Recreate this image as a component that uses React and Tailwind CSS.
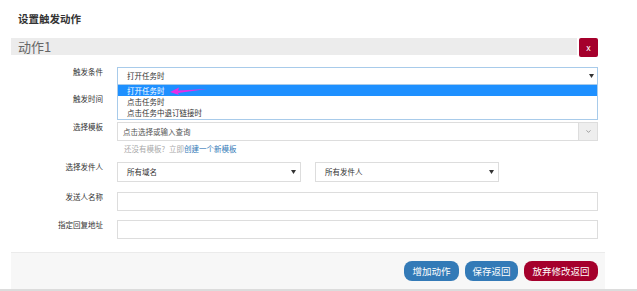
import React from 'react';
import { ChevronDown } from 'lucide-react';

const font = { fontFamily: '"Noto Sans CJK SC", "Noto Sans", sans-serif' };

const Caret = () => (
  <svg width="5" height="4" viewBox="0 0 5 4" className="shrink-0">
    <path d="M0 0 L5 0 L2.5 4 Z" fill="#333" />
  </svg>
);

const Row = ({ label, children, className = '' }) => (
  <div className={`flex items-start ${className}`}>
    <div className="w-[103px] shrink-0 text-right text-[7.5px] leading-[10px] text-[#333]">{label}</div>
    <div className="ml-[14px] flex-1">{children}</div>
  </div>
);

const App = () => {
  const options = ['打开任务时', '点击任务时', '点击任务中退订链接时'];

  return (
    <div className="w-[637px] h-[291px] bg-white relative overflow-hidden" style={font}>
      {/* Title */}
      <div className="pl-[18px] pt-[13px] text-[10.5px] leading-[12px] font-bold text-[#333]">设置触发动作</div>

      {/* Action header */}
      <div className="mt-[13px] ml-[11px] mr-[39px] flex items-start">
        <div className="flex-1 h-[17px] bg-[#ececec] pl-[7px] text-[13px] leading-[17px] text-[#666]">动作1</div>
        <button className="ml-[2px] w-[19px] h-[19px] bg-[#a5002c] rounded-[2px] text-white text-[9px] leading-[18px] text-center">x</button>
      </div>

      <div className="mr-[39px]">
        {/* 触发条件 */}
        <Row label="触发条件" className="mt-[10px]">
          <div className="relative">
            <div className="h-[18px] border border-[#a8cbea] bg-white flex items-center pl-[9px] pr-[3px] text-[7.5px] text-[#333]">
              <span className="flex-1">打开任务时</span>
              <Caret />
            </div>
            <div className="absolute left-0 right-0 top-[18px] z-10 bg-white border border-[#a8cbea] border-t-0 pb-[1px]">
              {options.map((o, i) => (
                <div
                  key={o}
                  className={`h-[11px] pl-[9px] text-[7.5px] leading-[11px] ${i === 0 ? 'bg-[#1e90ff] text-white' : 'text-[#333]'}`}
                >
                  {o}
                </div>
              ))}
              <svg className="absolute left-[52px] top-[2px]" width="38" height="8" viewBox="0 0 38 8">
                <path d="M0 5 L9 0.5 L8 3.4 L37 2 L8 5.9 L9 8 Z" fill="#e62ee6" />
              </svg>
            </div>
          </div>
        </Row>

        {/* 触发时间 */}
        <Row label="触发时间" className="mt-[9px]">
          <div className="h-[19px] border border-[#ddd] bg-white"></div>
        </Row>

        {/* 选择模板 */}
        <Row label="选择模板" className="mt-[9px]">
          <div className="h-[19px] border border-[#ddd] bg-white flex items-stretch">
            <span className="flex-1 pl-[5px] text-[7.5px] leading-[17px] text-[#555]">点击选择或输入查询</span>
            <span className="w-[19px] bg-[#eee] border-l border-[#ddd] flex items-center justify-center">
              <ChevronDown size={7} strokeWidth={2} color="#666" />
            </span>
          </div>
          <div className="mt-[3px] pl-[7px] text-[7.5px] leading-[10px] text-[#aaa]">
            还没有模板?<span className="ml-[4px]">立即</span><span className="text-[#337ab7]">创建一个新模板</span>
          </div>
        </Row>

        {/* 选择发件人 */}
        <Row label="选择发件人" className="mt-[8px]">
          <div className="flex gap-[14px]">
            <div className="w-[184px] h-[20px] border border-[#ddd] bg-white flex items-center pl-[9px] pr-[4px] text-[7.5px] text-[#333]">
              <span className="flex-1">所有域名</span>
              <Caret />
            </div>
            <div className="w-[184px] h-[20px] border border-[#ddd] bg-white flex items-center pl-[9px] pr-[4px] text-[7.5px] text-[#333]">
              <span className="flex-1">所有发件人</span>
              <Caret />
            </div>
          </div>
        </Row>

        {/* 发送人名称 */}
        <Row label="发送人名称" className="mt-[10px]">
          <div className="h-[19px] border border-[#ddd] bg-white"></div>
        </Row>

        {/* 指定回复地址 */}
        <Row label="指定回复地址" className="mt-[9px]">
          <div className="h-[19px] border border-[#ddd] bg-white"></div>
        </Row>
      </div>

      {/* Footer */}
      <div className="mt-[13px] ml-[11px] mr-[32px] h-[37px] bg-[#f7f7f7] border-t border-[#ebebeb] flex items-center justify-end gap-[5px] pr-[7px]">
        <button className="h-[20px] w-[55px] rounded-[8px] bg-[#337ab7] text-white text-[9.5px] leading-[20px]">增加动作</button>
        <button className="h-[20px] w-[53px] rounded-[8px] bg-[#337ab7] text-white text-[9.5px] leading-[20px] ml-[1px]">保存返回</button>
        <button className="h-[20px] w-[74px] rounded-[8px] bg-[#a5002c] text-white text-[9.5px] leading-[20px] ml-[1px]">放弃修改返回</button>
      </div>
      <div className="h-[2px] bg-[#dcdcdc]"></div>
    </div>
  );
};

export default App;
